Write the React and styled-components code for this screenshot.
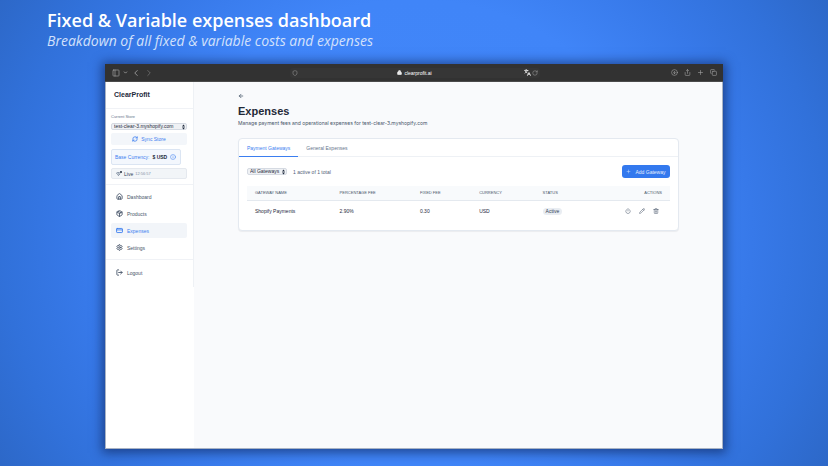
import React, { useState } from "react"
import styled, { createGlobalStyle, css } from "styled-components"
import {
  ArrowLeft,
  ChevronDown,
  ChevronLeft,
  ChevronRight,
  CircleArrowDown,
  Copy,
  CreditCard,
  House,
  Info,
  Languages,
  Lock,
  LogOut,
  Package,
  PanelLeft,
  Pencil,
  Plus,
  Power,
  RefreshCw,
  RotateCw,
  Settings,
  Share,
  Shield,
  Trash2,
} from "lucide-react"

const GlobalStyle = createGlobalStyle`
  * {
    box-sizing: border-box;
  }

  body {
    margin: 0;
    font-family: "Liberation Sans", Arial, sans-serif;
    font-size: 5px;
    color: #334155;
  }

  button, select {
    font: inherit;
    color: inherit;
  }

  h1, h2, p {
    margin: 0;
  }

  svg {
    display: block;
    flex: none;
  }
`

const Page = styled.div`
  min-height: 100vh;
  display: flex;
  flex-direction: column;
  padding: 8px 105px 17px;
  background: radial-gradient(ellipse 60% 100% at 50% 50%, #4387fa 0%, #4085f8 50%, #3779e9 68%, #3171da 83%, #2c66c4 100%);
`

const Heading = styled.header`
  margin-left: -58px;
  height: 56px;
  font-family: "Open Sans", "Noto Sans", sans-serif;
  color: #ffffff;
  white-space: nowrap;

  h1 {
    font-size: 18px;
    line-height: 25px;
    font-weight: 600;
  }

  p {
    font-size: 14px;
    line-height: 15px;
    font-style: italic;
    color: #d3e1fb;
  }
`

const BrowserWindow = styled.div`
  flex: 1;
  display: flex;
  flex-direction: column;
  border: 1px solid #a9b3c4;
  border-top: 0;
  background: #f9fafc;
  box-shadow: 0 1px 10px 3px rgba(15, 40, 95, 0.65);
`

const Toolbar = styled.div`
  display: grid;
  grid-template-columns: 1fr 250px 1fr;
  align-items: center;
  height: 18px;
  margin: 0 -1px;
  padding: 0 6px 0 7px;
  background: #323232;
  border-bottom: 1px solid #4b4b4b;
  color: #a3a3a3;
`

const ToolGroup = styled.div`
  display: flex;
  align-items: center;
  justify-content: ${props => (props.$end ? "flex-end" : "flex-start")};
  gap: ${props => props.$gap}px;
`

const ToolButton = styled.button`
  display: flex;
  padding: 0;
  border: 0;
  background: none;
  color: ${props => (props.$dim ? "#6d6d6d" : "inherit")};
`

const AddressBar = styled.div`
  display: grid;
  grid-template-columns: 1fr auto 1fr;
  align-items: center;
  height: 10px;
  padding: 0 2px;
  border-radius: 3px;
  background: #363636;
`

const Address = styled.span`
  display: flex;
  align-items: center;
  gap: 2px;
  color: #ffffff;
`

const Body = styled.div`
  flex: 1;
  display: flex;
`

const Sidebar = styled.aside`
  width: 88px;
  background: #ffffff;
`

const SidebarInner = styled.div`
  height: 205px;
  border-right: 1px solid #eef1f5;
`

const Brand = styled.div`
  height: 27px;
  padding: 0 8px;
  border-bottom: 1px solid #f0f2f6;
  font-size: 7px;
  line-height: 26px;
  font-weight: 700;
  color: #1e293b;
`

const StorePanel = styled.div`
  display: flex;
  flex-direction: column;
  align-items: stretch;
  gap: 3px;
  height: 76px;
  padding: 5px 6px 0 5px;
  border-bottom: 1px solid #f0f2f6;
`

const StoreLabel = styled.label`
  font-size: 4px;
  line-height: 6px;
  color: #64748b;
`

const SelectWrap = styled.span`
  display: grid;
  align-items: center;

  select, svg {
    grid-area: 1 / 1;
  }

  svg {
    justify-self: end;
    margin-right: 1px;
    pointer-events: none;
  }
`

const Select = styled.select`
  appearance: none;
  width: 100%;
  height: 7px;
  padding: 0 6px 0 2px;
  border: 1px solid #d5dae2;
  border-radius: 2px;
  background: #eff1f4;
  font-size: 5px;
  line-height: 5px;
  color: #1e293b;
`

const SyncButton = styled.button`
  display: flex;
  align-items: center;
  justify-content: center;
  gap: 3px;
  height: 12px;
  padding: 0;
  border: 0;
  border-radius: 2px;
  background: #f3f6fa;
  color: #3b7ef0;
`

const CurrencyBox = styled.div`
  align-self: flex-start;
  display: flex;
  align-items: center;
  gap: 3px;
  height: 16px;
  margin-top: 1px;
  padding: 0 4px 0 3px;
  border: 1px solid #dbe5f3;
  border-radius: 2px;
  background: #f3f7fd;
  color: #3b7ef0;
  white-space: nowrap;

  strong {
    color: #1e293b;
  }
`

const LiveBox = styled.div`
  display: flex;
  align-items: center;
  gap: 1px;
  height: 11px;
  padding: 0 3px;
  border: 1px solid #e5e9ef;
  border-radius: 2px;
  background: #f2f5f8;

  time {
    font-size: 4px;
    color: #8491a5;
    margin-left: 1px;
  }
`

const Nav = styled.nav`
  display: flex;
  flex-direction: column;
  gap: 2px;
  padding: 4px 6px 4px 5px;

  & + & {
    padding-top: 5px;
    border-top: 1px solid #f0f2f6;
  }
`

const NavItem = styled.a`
  display: flex;
  align-items: center;
  gap: 4px;
  height: 15px;
  padding: 0 5px;
  border-radius: 2px;
  text-decoration: none;
  color: #475569;

  ${props => props.$active && css`
    background: #f2f5f9;
    color: #3b7ef0;
  `}
`

const Main = styled.main`
  flex: 1;
  padding: 11px 43px 11px 44px;
`

const BackLink = styled.a`
  display: flex;
  height: 6px;
  color: #475569;
`

const PageTitle = styled.h2`
  margin-top: 6px;
  font-size: 11px;
  line-height: 13px;
  font-weight: 700;
  color: #1f2937;
`

const Subtitle = styled.p`
  margin-top: 2px;
  font-family: Inter, "Liberation Sans", sans-serif;
  font-size: 5px;
  line-height: 7px;
  color: #475569;
`

const Card = styled.section`
  height: 93px;
  margin-top: 11px;
  border: 1px solid #e4e9f0;
  border-radius: 4px;
  background: #ffffff;
  box-shadow: 0 1px 1px rgba(15, 23, 42, 0.06);
`

const Tabs = styled.div`
  display: flex;
  height: 18px;
  border-bottom: 1px solid #eef1f5;
`

const Tab = styled.button`
  height: 18px;
  padding: 0 8px;
  border: 0;
  border-bottom: 1px solid ${props => (props.$active ? "#3b7ef0" : "transparent")};
  background: none;
  color: ${props => (props.$active ? "#3b7ef0" : "#64748b")};
`

const CardBody = styled.div`
  padding: 8px;
`

const Filters = styled.div`
  display: flex;
  align-items: center;
  gap: 6px;
  height: 13px;
  color: #526077;
`

const AddButton = styled.button`
  display: flex;
  align-items: center;
  justify-content: center;
  gap: 4px;
  width: 48px;
  height: 13px;
  margin-left: auto;
  padding: 0;
  border: 0;
  border-radius: 3px;
  background: #3379ee;
  color: #e3edfd;
`

const Table = styled.table`
  width: 100%;
  margin-top: 8px;
  border-collapse: collapse;
  table-layout: fixed;

  th, td {
    padding: 0 8px;
    text-align: left;
  }

  th {
    height: 14px;
    border-bottom: 1px solid #e4e9ef;
    background: #f8fafc;
    font-size: 4px;
    font-weight: 400;
    color: #475569;
  }

  td {
    height: 22px;
    color: #1e293b;
  }

  th:last-child {
    text-align: right;
  }
`

const Badge = styled.span`
  display: inline-block;
  padding: 0 3px;
  border-radius: 4px;
  background: #e9edf2;
  line-height: 7px;
  color: #334155;
`

const Actions = styled.div`
  display: flex;
  justify-content: flex-end;
  gap: 8px;
  padding-right: 3px;
`

const IconButton = styled.button`
  display: flex;
  padding: 0;
  border: 0;
  background: none;
  color: #475569;
`

const SortArrows = () => (
  <svg width="5" height="6" viewBox="0 0 10 12" fill="#1e293b" aria-hidden="true">
    <path d="M5 1L8 5H2zM5 11L2 7h6z" />
  </svg>
)

const LiveIcon = () => (
  <svg width="8" height="8" viewBox="0 0 16 16" fill="none" stroke="#64748b" strokeWidth="1.5" aria-hidden="true">
    <path d="M2 7q4-4 8-1M4 9q3-3 5 0M6 12l4-5" />
    <circle cx="12" cy="4" r="2" fill="#1e293b" stroke="none" />
  </svg>
)

const links = [
  { name: "Dashboard", icon: House },
  { name: "Products", icon: Package },
  { name: "Expenses", icon: CreditCard },
  { name: "Settings", icon: Settings },
]

const columns = [
  { name: "GATEWAY NAME", width: "20%" },
  { name: "PERCENTAGE FEE", width: "19%" },
  { name: "FIXED FEE", width: "14%" },
  { name: "CURRENCY", width: "15%" },
  { name: "STATUS", width: "14%" },
  { name: "ACTIONS", width: "18%" },
]

const gateways = [
  { name: "Shopify Payments", percentage: "2.90%", fixed: "0.30", currency: "USD", status: "Active" },
]

const BrowserToolbar = () => (
  <Toolbar>
    <ToolGroup $gap={3}>
      <ToolButton aria-label="Toggle sidebar"><PanelLeft size={8} /></ToolButton>
      <ToolButton aria-label="Tab groups"><ChevronDown size={5} strokeWidth={4} /></ToolButton>
      <ToolButton aria-label="Back"><ChevronLeft size={10} /></ToolButton>
      <ToolButton aria-label="Forward" $dim><ChevronRight size={10} /></ToolButton>
    </ToolGroup>
    <AddressBar>
      <Shield size={6} />
      <Address><Lock size={5} fill="#e5e5e5" strokeWidth={3} />clearprofit.ai</Address>
      <ToolGroup $gap={1} $end>
        <Languages size={7} color="#e5e5e5" strokeWidth={3} />
        <RotateCw size={6} />
      </ToolGroup>
    </AddressBar>
    <ToolGroup $gap={6} $end>
      <ToolButton aria-label="Downloads"><CircleArrowDown size={7} /></ToolButton>
      <ToolButton aria-label="Share"><Share size={7} /></ToolButton>
      <ToolButton aria-label="New tab"><Plus size={7} /></ToolButton>
      <ToolButton aria-label="Tab overview"><Copy size={7} /></ToolButton>
    </ToolGroup>
  </Toolbar>
)

const StoreSidebar = () => (
  <Sidebar>
    <SidebarInner>
      <Brand>ClearProfit</Brand>
      <StorePanel>
        <StoreLabel htmlFor="store">Current Store</StoreLabel>
        <SelectWrap>
          <Select id="store">
            <option>test-clear-3.myshopify.com</option>
          </Select>
          <SortArrows />
        </SelectWrap>
        <SyncButton><RefreshCw size={6} strokeWidth={3} />Sync Store</SyncButton>
        <CurrencyBox>
          Base Currency: <strong>$ USD</strong>
          <Info size={6} />
        </CurrencyBox>
        <LiveBox><LiveIcon />Live <time>12:56:57</time></LiveBox>
      </StorePanel>
      <Nav>
        {links.map(({ name, icon: Icon }) => (
          <NavItem key={name} href={"#" + name.toLowerCase()} $active={name === "Expenses"}>
            <Icon size={7} strokeWidth={3} />
            {name}
          </NavItem>
        ))}
      </Nav>
      <Nav>
        <NavItem href="#logout"><LogOut size={7} strokeWidth={3} />Logout</NavItem>
      </Nav>
    </SidebarInner>
  </Sidebar>
)

const GatewayTable = () => (
  <Table>
    <thead>
      <tr>
        {columns.map(column => (
          <th key={column.name} style={{ width: column.width }}>{column.name}</th>
        ))}
      </tr>
    </thead>
    <tbody>
      {gateways.map(gateway => (
        <tr key={gateway.name}>
          <td>{gateway.name}</td>
          <td>{gateway.percentage}</td>
          <td>{gateway.fixed}</td>
          <td>{gateway.currency}</td>
          <td><Badge>{gateway.status}</Badge></td>
          <td>
            <Actions>
              <IconButton aria-label="Deactivate"><Power size={6} /></IconButton>
              <IconButton aria-label="Edit"><Pencil size={6} /></IconButton>
              <IconButton aria-label="Delete"><Trash2 size={6} /></IconButton>
            </Actions>
          </td>
        </tr>
      ))}
    </tbody>
  </Table>
)

const App = () => {
  const [tab, setTab] = useState("Payment Gateways")

  return (
    <Page>
      <GlobalStyle />
      <Heading>
        <h1>Fixed &amp; Variable expenses dashboard</h1>
        <p>Breakdown of all fixed &amp; variable costs and expenses</p>
      </Heading>
      <BrowserWindow>
        <BrowserToolbar />
        <Body>
          <StoreSidebar />
          <Main>
            <BackLink href="#back" aria-label="Back"><ArrowLeft size={6} strokeWidth={3} /></BackLink>
            <PageTitle>Expenses</PageTitle>
            <Subtitle>Manage payment fees and operational expenses for test-clear-3.myshopify.com</Subtitle>
            <Card>
              <Tabs>
                {["Payment Gateways", "General Expenses"].map(name => (
                  <Tab key={name} $active={tab === name} onClick={() => setTab(name)}>{name}</Tab>
                ))}
              </Tabs>
              <CardBody>
                <Filters>
                  <SelectWrap>
                    <Select aria-label="Gateway filter">
                      <option>All Gateways</option>
                    </Select>
                    <SortArrows />
                  </SelectWrap>
                  <span>1 active of 1 total</span>
                  <AddButton><Plus size={5} />Add Gateway</AddButton>
                </Filters>
                <GatewayTable />
              </CardBody>
            </Card>
          </Main>
        </Body>
      </BrowserWindow>
    </Page>
  )
}

export default App
